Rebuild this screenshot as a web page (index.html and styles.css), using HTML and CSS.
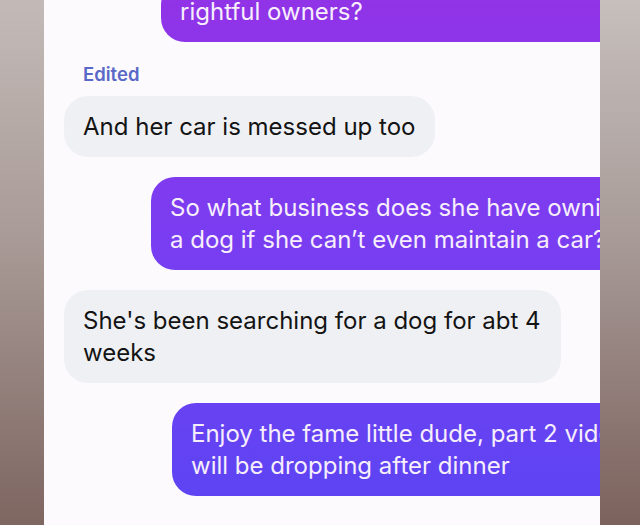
FILE: index.html
```html
<!DOCTYPE html>
<html>
<head>
  <title>Chat</title>
  <link rel="stylesheet" href="styles.css">
</head>
<body>
  <div class="screen">
    <div class="edge edge-left"></div>

    <div class="thread">
      <div class="bubble out indent-a">rightful owners?</div>

      <div class="label">Edited</div>
      <div class="bubble in">And her car is messed up too</div>

      <div class="bubble out indent-b">So what business does she have owning<br>a dog if she can’t even maintain a car?</div>

      <div class="bubble in">She's been searching for a dog for abt 4<br>weeks</div>

      <div class="bubble out indent-c">Enjoy the fame little dude, part 2 video<br>will be dropping after dinner</div>
    </div>

    <div class="edge edge-right"></div>
  </div>
</body>
</html>
```

FILE: styles.css
```css
html, body { margin: 0; height: 100%; }
body { font-family: Inter, "Noto Sans", "Liberation Sans", sans-serif; overflow: hidden; }

.screen { display: flex; height: 525px; }

.edge { flex: none; }
.edge-left { width: 44px; background: linear-gradient(to bottom, #c3bab7, #a99b97 45%, #7e6661); }
.edge-right { width: 40px; background: linear-gradient(to bottom, #c6bfbc, #a89b98 45%, #7c625d); }

.thread {
  flex: 1;
  display: flex;
  flex-direction: column;
  align-items: flex-start;
  padding: 0 20px;
  background: #fcfafd;
  overflow: hidden;
}

.bubble {
  font-size: 24px;
  line-height: 32px;
  padding: 15px 20px 14px 19px;
  border-radius: 24px;
  white-space: nowrap;
  margin-bottom: 20px;
}
.bubble.in { background: #eff0f3; color: #141414; }
.bubble.out {
  align-self: stretch;
  margin-right: -70px;
  color: #f7eefc;
  background: linear-gradient(to bottom, #9133e7, #7a3df1 45%, #5a45f3) fixed;
}

.indent-a { margin-left: 97px; margin-top: -19px; }
.indent-b { margin-left: 87px; }
.indent-c { margin-left: 108px; }

.label {
  font-size: 18.5px;
  font-weight: 600;
  line-height: 20px;
  color: #5a68c7;
  margin: 2px 0 12px 19px;
}
```
